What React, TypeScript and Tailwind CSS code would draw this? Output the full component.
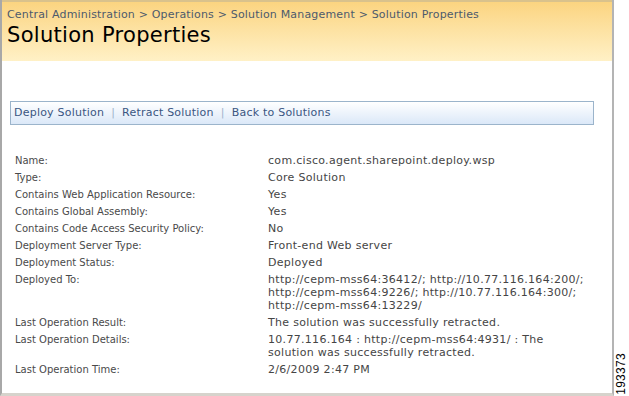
const rows: { label: string; value: string[] }[] = [
  { label: "Name:", value: ["com.cisco.agent.sharepoint.deploy.wsp"] },
  { label: "Type:", value: ["Core Solution"] },
  { label: "Contains Web Application Resource:", value: ["Yes"] },
  { label: "Contains Global Assembly:", value: ["Yes"] },
  { label: "Contains Code Access Security Policy:", value: ["No"] },
  { label: "Deployment Server Type:", value: ["Front-end Web server"] },
  { label: "Deployment Status:", value: ["Deployed"] },
  {
    label: "Deployed To:",
    value: [
      "http://cepm-mss64:36412/; http://10.77.116.164:200/;",
      "http://cepm-mss64:9226/; http://10.77.116.164:300/;",
      "http://cepm-mss64:13229/",
    ],
  },
  { label: "Last Operation Result:", value: ["The solution was successfully retracted."] },
  {
    label: "Last Operation Details:",
    value: ["10.77.116.164 : http://cepm-mss64:4931/ : The", "solution was successfully retracted."],
  },
  { label: "Last Operation Time:", value: ["2/6/2009 2:47 PM"] },
];

const actions = ["Deploy Solution", "Retract Solution", "Back to Solutions"];

export default function App() {
  return (
    <div className="flex w-[629px] h-[396px] bg-white overflow-hidden font-['DejaVu_Sans',sans-serif]">
      <div className="flex flex-col w-[614px] h-[396px] border-l-2 border-l-[#a8a8a8] border-r-2 border-r-[#b4b4b4] border-b-[3px] border-b-[#d6d3cc]">
        {/* header band */}
        <div className="h-[61px] pl-[5px] pt-[6px] border-t-2 border-t-[#d9c28c] bg-gradient-to-b from-[#fbd480] to-[#fff1c6]">
          <div className="text-[11px] leading-[14px] text-[#4d5a6c] tracking-[0.18px]">
            Central Administration &gt; Operations &gt; Solution Management &gt; Solution Properties
          </div>
          <div className="text-[21px] leading-[24px] text-black mt-[1px] tracking-[0.3px]">Solution Properties</div>
        </div>

        {/* toolbar */}
        <div className="mt-[40px] ml-[8px] w-[584px] h-[24px] flex items-center pl-[3px] border border-[#9bb4cb] bg-gradient-to-b from-[#ffffff] to-[#dbe8f8] text-[11px] text-[#3b5682] tracking-[0.22px]">
          {actions.map((a, i) => (
            <div key={a} className="flex items-center">
              {i > 0 && <span className="mx-[7px] text-[#9fb3cc]">|</span>}
              <span>{a}</span>
            </div>
          ))}
        </div>

        {/* properties */}
        <div className="mt-[27px] ml-[13px] flex flex-col text-[10px] leading-[13px] text-[#4a4a4a]">
          {rows.map((r) => (
            <div key={r.label} className="flex py-[2px]">
              <div className="w-[253px] shrink-0">{r.label}</div>
              <div className="w-[335px] text-[11px] leading-[13px] tracking-[0.3px] text-[#454545]">
                {r.value.map((v) => (
                  <div key={v}>{v}</div>
                ))}
              </div>
            </div>
          ))}
        </div>
      </div>

      <div className="flex-1 flex flex-col justify-end items-center pb-[1px]">
        <div className="[writing-mode:vertical-rl] rotate-180 font-['Liberation_Sans',sans-serif] text-[12px] leading-[13px] text-black tracking-[0.3px]">
          193373
        </div>
      </div>
    </div>
  );
}
